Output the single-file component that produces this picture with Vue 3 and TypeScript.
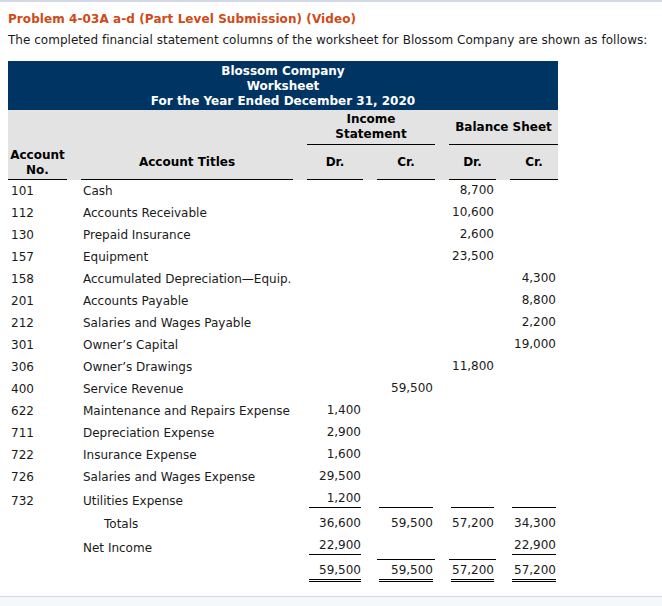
<script setup lang="ts">
interface Row { no: string; title: string; vals: string[]; cls?: string }
const rows: Row[] = [
  { no: '101', title: 'Cash', vals: ['', '', '8,700', ''] },
  { no: '112', title: 'Accounts Receivable', vals: ['', '', '10,600', ''] },
  { no: '130', title: 'Prepaid Insurance', vals: ['', '', '2,600', ''] },
  { no: '157', title: 'Equipment', vals: ['', '', '23,500', ''] },
  { no: '158', title: 'Accumulated Depreciation—Equip.', vals: ['', '', '', '4,300'] },
  { no: '201', title: 'Accounts Payable', vals: ['', '', '', '8,800'] },
  { no: '212', title: 'Salaries and Wages Payable', vals: ['', '', '', '2,200'] },
  { no: '301', title: 'Owner’s Capital', vals: ['', '', '', '19,000'] },
  { no: '306', title: 'Owner’s Drawings', vals: ['', '', '11,800', ''] },
  { no: '400', title: 'Service Revenue', vals: ['', '59,500', '', ''] },
  { no: '622', title: 'Maintenance and Repairs Expense', vals: ['1,400', '', '', ''] },
  { no: '711', title: 'Depreciation Expense', vals: ['2,900', '', '', ''] },
  { no: '722', title: 'Insurance Expense', vals: ['1,600', '', '', ''] },
  { no: '726', title: 'Salaries and Wages Expense', vals: ['29,500', '', '', ''] },
]
const totals = ['36,600', '59,500', '57,200', '34,300']
const net = ['22,900', '', '', '22,900']
const grand = ['59,500', '59,500', '57,200', '57,200']
const util = ['1,200', '', '', '']
</script>

<template>
  <div class="page">
    <main class="content">
      <h1 class="title">Problem 4-03A a-d (Part Level Submission) (Video)</h1>
      <p class="intro">The completed financial statement columns of the worksheet for Blossom Company are shown as follows:</p>
      <div class="sheet">
        <div class="banner">
          <div>Blossom Company</div>
          <div>Worksheet</div>
          <div>For the Year Ended December 31, 2020</div>
        </div>
        <div class="head">
          <div class="grid head-top">
            <div class="group group-income">Income<br />Statement</div>
            <div class="group group-balance">Balance Sheet</div>
          </div>
          <div class="grid head-bottom">
            <div class="hc hc-no">Account<br />No.</div>
            <div class="hc">Account Titles</div>
            <div class="hc">Dr.</div>
            <div class="hc">Cr.</div>
            <div class="hc">Dr.</div>
            <div class="hc">Cr.</div>
          </div>
        </div>
        <div v-for="r in rows" :key="r.no" class="grid row">
          <div class="no">{{ r.no }}</div>
          <div class="name">{{ r.title }}</div>
          <div v-for="(v, i) in r.vals" :key="i" class="num"><span class="amt">{{ v }}</span></div>
        </div>
        <div class="grid row row-util">
          <div class="no">732</div>
          <div class="name">Utilities Expense</div>
          <div v-for="(v, i) in util" :key="i" class="num"><span class="amt ruled">{{ v }}</span></div>
        </div>
        <div class="grid row row-totals">
          <div></div>
          <div class="name indent">Totals</div>
          <div v-for="(v, i) in totals" :key="i" class="num"><span class="amt">{{ v }}</span></div>
        </div>
        <div class="grid row row-net">
          <div></div>
          <div class="name">Net Income</div>
          <div class="num"><span class="amt ruled">{{ net[0] }}</span></div>
          <div class="num"></div>
          <div class="num"></div>
          <div class="num"><span class="amt ruled">{{ net[3] }}</span></div>
        </div>
        <div class="grid row row-grand">
          <div></div>
          <div></div>
          <div class="num"><span class="amt dbl">{{ grand[0] }}</span></div>
          <div class="num top"><span class="amt dbl">{{ grand[1] }}</span></div>
          <div class="num top"><span class="amt dbl">{{ grand[2] }}</span></div>
          <div class="num"><span class="amt dbl">{{ grand[3] }}</span></div>
        </div>
      </div>
    </main>
    <footer class="foot"></footer>
  </div>
</template>

<style scoped>
.page {
  width: 662px;
  height: 606px;
  display: flex;
  flex-direction: column;
  box-sizing: border-box;
  border-top: 2px solid #d3d9e6;
  background: #fff;
  font-family: "DejaVu Sans", Verdana, sans-serif;
  font-size: 12px;
  color: #1a1a1a;
  overflow: hidden;
}
.content {
  flex: 1;
  padding: 8px 8px 0;
}
.title {
  margin: 0;
  font-size: 12px;
  line-height: 18px;
  font-weight: 700;
  letter-spacing: 0.08px;
  color: #cf4a16;
}
.intro {
  margin: 3px 0 0;
  line-height: 18px;
  letter-spacing: 0.02px;
  color: #1a1a1a;
}
.sheet {
  width: 550px;
  margin-top: 12px;
}
.banner {
  background: #003462;
  color: #fff;
  font-weight: 700;
  text-align: center;
  line-height: 15px;
  padding: 3px 0 0;
  height: 49px;
  box-sizing: border-box;
}
.grid {
  display: grid;
  grid-template-columns: 59px 212px 56px 58px 47px 48px;
  column-gap: 14px;
}
.head {
  background: #e3e3e3;
  height: 70px;
  color: #000;
  font-weight: 700;
  text-align: center;
  line-height: 15px;
}
.head-top {
  height: 35px;
}
.group {
  border-bottom: 1px solid #000;
  display: flex;
  align-items: center;
  justify-content: center;
  box-sizing: border-box;
}
.group-income {
  grid-column: 3 / 5;
}
.group-balance {
  grid-column: 5 / 7;
}
.head-bottom {
  height: 35px;
}
.hc {
  border-bottom: 1px solid #000;
  box-sizing: border-box;
  display: flex;
  align-items: center;
  justify-content: center;
  height: 35px;
}
.hc-no {
  padding-top: 2px;
}
.row {
  height: 22px;
  line-height: 23px;
  color: #1a1a1a;
}
.no {
  padding-left: 3px;
}
.name {
  padding-left: 2px;
}
.num {
  text-align: right;
  line-height: 20px;
}
.amt {
  display: block;
  margin: 0 2px;
  height: 100%;
  box-sizing: border-box;
}
.name.indent {
  padding-left: 23px;
}
.row-util {
  height: 24px;
  line-height: 26px;
}
.ruled {
  border-bottom: 1px solid #000;
}
.row-util .amt {
  height: 20px;
}
.row-totals {
  height: 23px;
  line-height: 24px;
}
.row-totals .num {
  line-height: 22px;
}
.row-net {
  height: 24px;
  line-height: 26px;
}
.row-net .amt {
  height: 20px;
}
.row-grand {
  height: 23px;
}
.row-grand .num {
  line-height: 22px;
}
.row-grand .num.top {
  border-top: 1px solid #000;
  box-sizing: border-box;
  line-height: 20px;
}
.dbl {
  border-bottom: 3px double #000;
  height: 23px;
}
.top .dbl {
  height: 22px;
}
.foot {
  height: 9px;
  border-top: 1px solid #d3d9e6;
  background: #f5f8fb;
}
</style>
